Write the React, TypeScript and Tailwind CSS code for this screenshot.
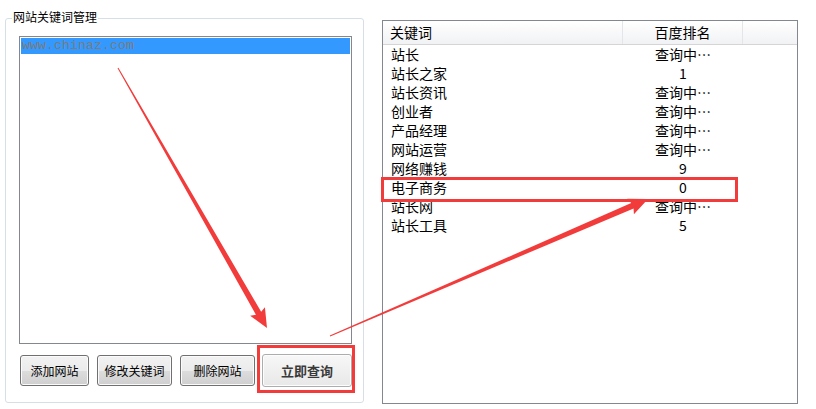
import React from "react";

type Row = { word: string; rank: string };

const rows: Row[] = [
  { word: "站长", rank: "查询中⋯" },
  { word: "站长之家", rank: "1" },
  { word: "站长资讯", rank: "查询中⋯" },
  { word: "创业者", rank: "查询中⋯" },
  { word: "产品经理", rank: "查询中⋯" },
  { word: "网站运营", rank: "查询中⋯" },
  { word: "网络赚钱", rank: "9" },
  { word: "电子商务", rank: "0" },
  { word: "站长网", rank: "查询中⋯" },
  { word: "站长工具", rank: "5" },
];

// tapered arrow like the snipping tool draws
const arrowPoints = (
  x1: number,
  y1: number,
  x2: number,
  y2: number,
  w0: number,
  w1: number,
  headLen: number,
  headW: number
) => {
  const dx = x2 - x1;
  const dy = y2 - y1;
  const len = Math.hypot(dx, dy);
  const ux = dx / len;
  const uy = dy / len;
  const px = -uy;
  const py = ux;
  const bx = x2 - ux * headLen;
  const by = y2 - uy * headLen;
  const pts = [
    [x1 + (px * w0) / 2, y1 + (py * w0) / 2],
    [bx + (px * w1) / 2, by + (py * w1) / 2],
    [bx + (px * headW) / 2 - ux * 2, by + (py * headW) / 2 - uy * 2],
    [x2, y2],
    [bx - (px * headW) / 2 - ux * 2, by - (py * headW) / 2 - uy * 2],
    [bx - (px * w1) / 2, by - (py * w1) / 2],
    [x1 - (px * w0) / 2, y1 - (py * w0) / 2],
  ];
  return pts.map((p) => p.join(",")).join(" ");
};

const oldButton =
  "h-[31px] border border-[#707070] rounded-[3px] bg-[linear-gradient(180deg,#f2f2f2_0%,#ebebeb_50%,#dddddd_50%,#cfcfcf_100%)] shadow-[inset_0_0_0_1px_#fbfbfb] text-[12px] leading-none text-black";

export default function App() {
  return (
    <div className="relative w-[816px] h-[409px] bg-white flex items-start overflow-hidden font-['Noto_Sans_CJK_SC',sans-serif] text-black">
      {/* left group box */}
      <div className="relative ml-[5px] mt-[18px] w-[359px] h-[385px] border border-[#d5dfe5] rounded-[3px] pt-[17px] pl-[13px] flex flex-col">
        <span className="absolute left-[6px] top-[-10px] bg-white px-px text-[12px] leading-[16px]">
          网站关键词管理
        </span>

        <div className="w-[333px] h-[308px] border border-[#828790] p-px">
          <div className="h-[16px] bg-[#3399ff] pl-px text-[13.33px] leading-[16px] font-['Liberation_Mono',monospace] text-[#7c7c7c]">
            www.chinaz.com
          </div>
        </div>

        <div className="mt-[10px] ml-px flex items-center h-[33px]">
          <button className={`${oldButton} w-[69px]`}>添加网站</button>
          <button className={`${oldButton} w-[75px] ml-[8px]`}>修改关键词</button>
          <button className={`${oldButton} w-[75px] ml-[8px]`}>删除网站</button>
          <div className="relative ml-[7px]">
            <button className="h-[33px] w-[90px] border border-[#adadad] rounded-[3px] bg-[linear-gradient(180deg,#f7f7f7,#e8e8e8)] shadow-[inset_0_0_0_1px_#fdfdfd] text-[13px] font-semibold leading-none text-[#3a3a3a]">
              立即查询
            </button>
            <div className="absolute left-[-5px] top-[-9px] w-[98px] h-[48px] border-[3px] border-[#f23c3c]" />
          </div>
        </div>
      </div>

      {/* right list view */}
      <div className="ml-[18px] mt-[20px] w-[416px] h-[384px] border border-[#828790] text-[14px]">
        <div className="flex h-[24px] border-b border-[#d5d5d5] bg-[linear-gradient(180deg,#ffffff,#f1f2f4)] leading-[23px]">
          <div className="w-[240px] pl-[7px] border-r border-[#e3e5e8]">关键词</div>
          <div className="w-[120px] text-center border-r border-[#e3e5e8]">百度排名</div>
          <div className="flex-1" />
        </div>
        {rows.map((r) => (
          <div key={r.word} className="flex h-[19px] leading-[19px]">
            <div className="w-[240px] pl-[8px]">{r.word}</div>
            <div className="w-[120px] text-center">{r.rank}</div>
          </div>
        ))}
      </div>

      {/* highlight around 电子商务 */}
      <div className="absolute left-[381px] top-[177px] w-[357px] h-[25px] border-[3px] border-[#f23c3c]" />

      <svg className="absolute left-0 top-0 pointer-events-none" width="816" height="409" viewBox="0 0 816 409">
        <polygon points={arrowPoints(118, 68, 267, 328, 1, 6, 17, 17)} fill="#f23c3c" />
        <polygon points={arrowPoints(330, 336, 648, 199, 1, 6, 17, 17)} fill="#f23c3c" />
      </svg>
    </div>
  );
}
